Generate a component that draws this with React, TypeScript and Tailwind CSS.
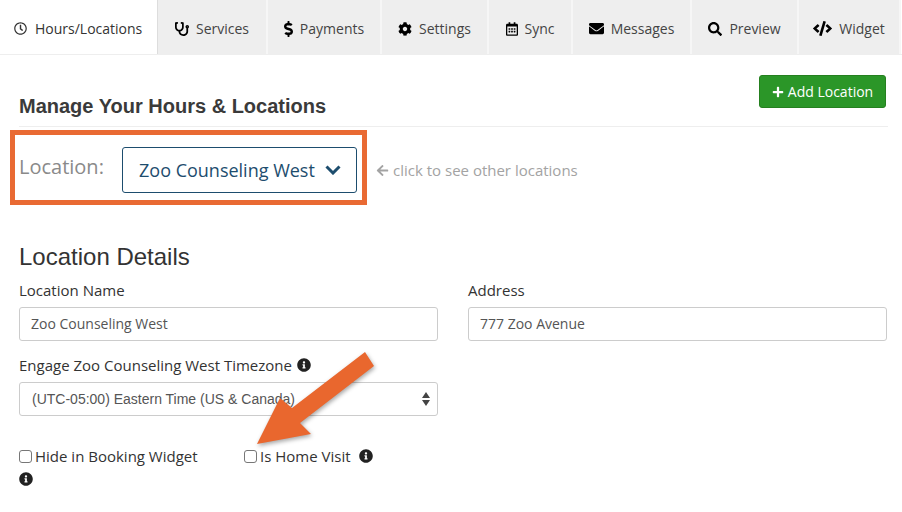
import { FaRegClock, FaStethoscope, FaDollarSign, FaCog, FaRegCalendarAlt, FaEnvelope, FaSearch, FaCode, FaPlus, FaInfoCircle, FaArrowLeft } from "react-icons/fa";

const tabs = [
  { label: "Services", Icon: FaStethoscope, w: "w-[110px]", size: "text-[14px]" },
  { label: "Payments", Icon: FaDollarSign, w: "w-[114px]", size: "h-[16px] w-[9px]" },
  { label: "Settings", Icon: FaCog, w: "w-[107px]", size: "text-[14px]" },
  { label: "Sync", Icon: FaRegCalendarAlt, w: "w-[84px]", size: "h-[14px] w-[12px]" },
  { label: "Messages", Icon: FaEnvelope, w: "w-[119px]", size: "text-[15px]" },
  { label: "Preview", Icon: FaSearch, w: "w-[107px]", size: "text-[14px]" },
  { label: "Widget", Icon: FaCode, w: "w-[102px]", size: "text-[19px]" },
];

function Field({ label, value }: { label: string; value: string }) {
  return (
    <div className="w-[419px]">
      <div className="text-[15px] leading-[20px] text-[#333]">{label}</div>
      <div className="mt-[7px] h-[34px] rounded-[3px] border border-[#ccc] px-[11px] text-[14px] leading-[32px] text-[#555]">{value}</div>
    </div>
  );
}

export default function App() {
  return (
    <div className="relative h-[512px] w-[902px] overflow-hidden bg-white font-['Open_Sans',sans-serif] text-[#333]">
      <div className="flex h-[55px] items-stretch border-b border-[#eee]">
        <div className="flex w-[158px] items-center gap-[8px] border-r border-[#ddd] bg-white pt-[3px] pl-[14px] text-[14px]">
          <FaRegClock className="text-[13px]" />
          Hours/Locations
        </div>
        {tabs.map(({ label, Icon, w, size }) => (
          <div key={label} className={`flex ${w} items-center justify-center gap-[7px] border-r-2 border-[#f6f6f6] bg-[#eee] pt-[3px] text-[14px] text-[#444]`}>
            <Icon className={`${size} text-black`} />
            {label}
          </div>
        ))}
      </div>

      <div className="mr-[14px] ml-[19px] flex h-[72px] items-end justify-between border-b border-[#eee] pr-[2px]">
        <h2 className="mb-[8px] font-['Liberation_Sans',sans-serif] text-[20px] leading-[24px] font-bold text-[#3a3a3a]">Manage Your Hours &amp; Locations</h2>
        <div className="mb-[18px] flex h-[33px] w-[127px] items-center justify-center gap-[4px] rounded-[3px] border border-[#25801f] bg-[#2b9628] text-[14px] text-white">
          <FaPlus className="text-[12px]" />
          Add Location
        </div>
      </div>

      <div className="mt-[3px] flex items-center">
        <div className="ml-[10px] flex h-[75px] w-[357px] items-center border-[5px] border-[#e96a33] pl-[4px]">
          <span className="mb-[2px] w-[103px] text-[20px] text-[#8a8a8a]">Location:</span>
          <div className="mt-[5px] flex h-[46px] w-[235px] items-center gap-[10px] rounded-[3px] border border-[#1d4d6e] pl-[16px] text-[18px] text-[#1d4d6e]">
            Zoo Counseling West
            <svg width="16" height="10" viewBox="0 0 16 10" fill="none" stroke="currentColor" strokeWidth="3">
              <path d="M1.5 1.5 L8 8 L14.5 1.5" />
            </svg>
          </div>
        </div>
        <div className="mt-[5px] ml-[9px] flex items-center gap-[4px] text-[15px] text-[#a3a3a3]">
          <FaArrowLeft className="text-[13px]" />
          click to see other locations
        </div>
      </div>

      <div className="pr-[15px] pl-[19px]">
        <h3 className="mt-[36px] font-['Liberation_Sans',sans-serif] text-[24px] leading-[32px] text-[#333]">Location Details</h3>
        <div className="mt-[7px] flex justify-between">
          <Field label="Location Name" value="Zoo Counseling West" />
          <Field label="Address" value="777 Zoo Avenue" />
        </div>
        <div className="mt-[14px] flex items-center gap-[5px] text-[15px] leading-[20px]">
          Engage Zoo Counseling West Timezone
          <FaInfoCircle className="text-[14px] text-[#222]" />
        </div>
        <div className="mt-[7px] flex h-[34px] w-[419px] items-center justify-between rounded-[3px] border border-[#ccc] pr-[7px] pl-[12px] font-['Liberation_Sans',sans-serif] text-[14px] text-[#555]">
          (UTC-05:00) Eastern Time (US &amp; Canada)
          <svg width="8" height="16" viewBox="0 0 8 16" className="text-[#444]">
            <path d="M4 1 L8 7 H0 Z M4 15 L8 9 H0 Z" fill="currentColor" />
          </svg>
        </div>
        <div className="mt-[30px] flex text-[15px] leading-[20px]">
          <div className="w-[225px]">
            <div className="flex items-center gap-[3px]">
              <span className="h-[13px] w-[13px] rounded-[3px] border border-[#777] bg-white" />
              Hide in Booking Widget
            </div>
            <FaInfoCircle className="mt-[6px] text-[14px] text-[#222]" />
          </div>
          <div className="flex h-[20px] items-center gap-[3px]">
            <span className="h-[13px] w-[13px] rounded-[3px] border border-[#777] bg-white" />
            Is Home Visit
            <FaInfoCircle className="ml-[5px] text-[14px] text-[#222]" />
          </div>
        </div>
      </div>

      <svg className="absolute top-[350px] left-[250px]" width="130" height="100" viewBox="0 0 130 100" style={{ filter: "drop-shadow(1px 2px 2px rgba(0,0,0,0.35))" }}>
        <path d="M115 2 L124 16 L50 73 L61 84 L7 94 L30 48 L42 58 Z" fill="#e9672e" />
      </svg>
    </div>
  );
}
